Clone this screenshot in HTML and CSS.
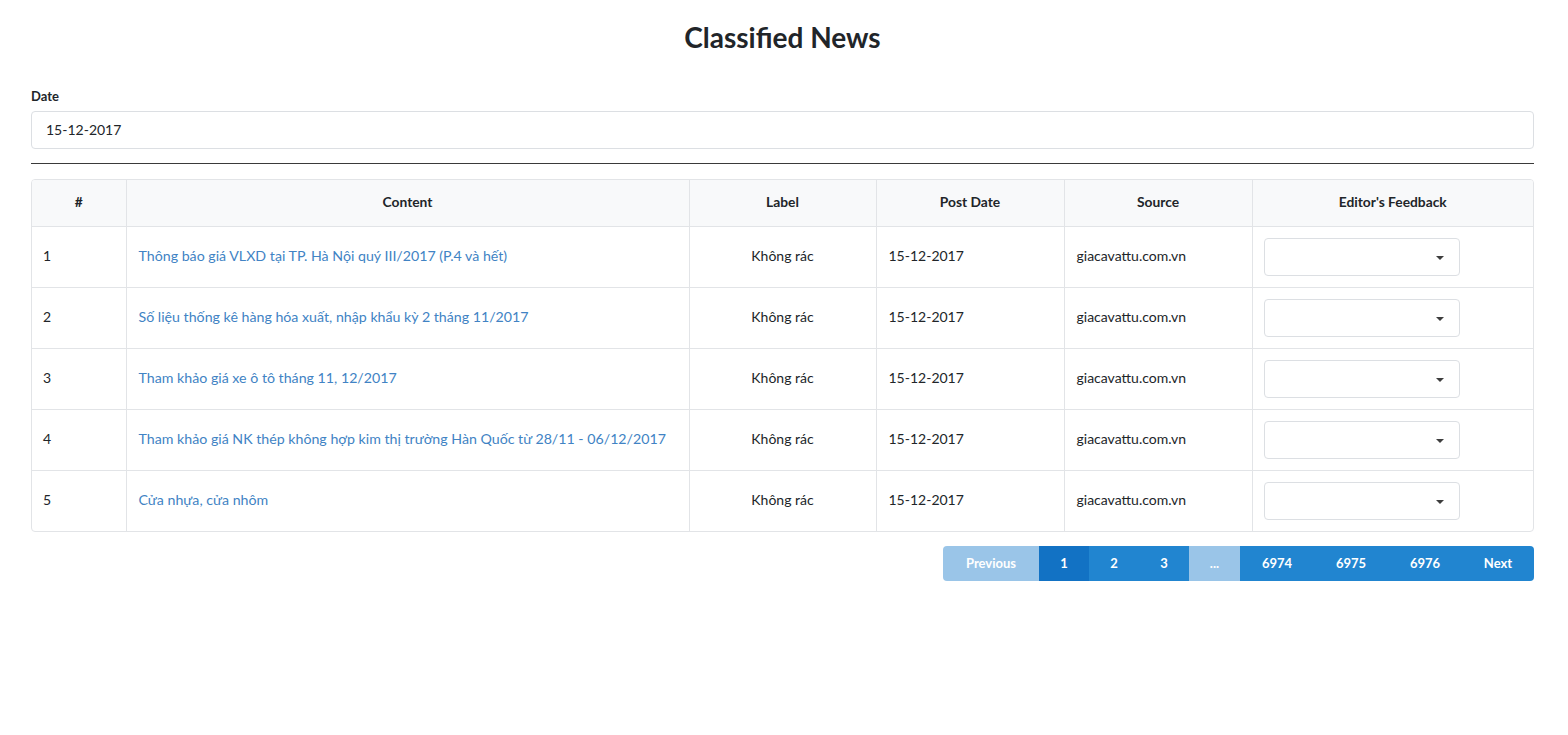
FILE: index.html
```html
<!DOCTYPE html>
<html>
<head>
<meta charset="utf-8">
<link rel="stylesheet" href="styles.css">
</head>
<body>
<div class="page">
  <h1 class="title">Classified News</h1>
  <div class="field">
    <label class="field-label">Date</label>
    <div class="input">15-12-2017</div>
  </div>
  <hr class="divider">
  <div class="table-wrap">
    <table class="news">
      <thead>
        <tr>
          <th class="c-num">#</th>
          <th class="c-content">Content</th>
          <th class="c-label">Label</th>
          <th class="c-date">Post Date</th>
          <th class="c-source">Source</th>
          <th class="c-fb">Editor's Feedback</th>
        </tr>
      </thead>
      <tbody>
        <tr>
          <td>1</td>
          <td><a class="link">Thông báo giá VLXD tại TP. Hà Nội quý III/2017 (P.4 và hết)</a></td>
          <td class="center">Không rác</td>
          <td>15-12-2017</td>
          <td>giacavattu.com.vn</td>
          <td class="fb"><div class="select"><span class="caret"></span></div></td>
        </tr>
        <tr>
          <td>2</td>
          <td><a class="link">Số liệu thống kê hàng hóa xuất, nhập khẩu kỳ 2 tháng 11/2017</a></td>
          <td class="center">Không rác</td>
          <td>15-12-2017</td>
          <td>giacavattu.com.vn</td>
          <td class="fb"><div class="select"><span class="caret"></span></div></td>
        </tr>
        <tr>
          <td>3</td>
          <td><a class="link">Tham khảo giá xe ô tô tháng 11, 12/2017</a></td>
          <td class="center">Không rác</td>
          <td>15-12-2017</td>
          <td>giacavattu.com.vn</td>
          <td class="fb"><div class="select"><span class="caret"></span></div></td>
        </tr>
        <tr>
          <td>4</td>
          <td><a class="link">Tham khảo giá NK thép không hợp kim thị trường Hàn Quốc từ 28/11 - 06/12/2017</a></td>
          <td class="center">Không rác</td>
          <td>15-12-2017</td>
          <td>giacavattu.com.vn</td>
          <td class="fb"><div class="select"><span class="caret"></span></div></td>
        </tr>
        <tr>
          <td>5</td>
          <td><a class="link">Cửa nhựa, cửa nhôm</a></td>
          <td class="center">Không rác</td>
          <td>15-12-2017</td>
          <td>giacavattu.com.vn</td>
          <td class="fb"><div class="select"><span class="caret"></span></div></td>
        </tr>
      </tbody>
    </table>
  </div>
  <div class="pager-row">
    <div class="pager">
      <span class="pg disabled pg-prev">Previous</span>
      <span class="pg active">1</span>
      <span class="pg">2</span>
      <span class="pg">3</span>
      <span class="pg disabled pg-dots">...</span>
      <span class="pg pg-wide">6974</span>
      <span class="pg pg-wide">6975</span>
      <span class="pg pg-wide">6976</span>
      <span class="pg pg-next">Next</span>
    </div>
  </div>
</div>
</body>
</html>
```

FILE: styles.css
```css
* { box-sizing: border-box; }
html, body { margin: 0; padding: 0; background: #fff; }
body {
  font-family: Lato, "Open Sans", "Liberation Sans", sans-serif;
  font-size: 14px;
  color: #212529;
}
.page {
  padding: 0 34px 0 31px;
}
.title {
  margin: 0;
  padding-top: 20px;
  height: 70px;
  text-align: center;
  font-size: 28px;
  font-weight: 700;
  line-height: 34px;
  color: #212529;
}
.field {
  margin-top: 16px;
  display: flex;
  flex-direction: column;
}
.field-label {
  font-size: 13px;
  font-weight: 700;
  line-height: 20px;
  margin-bottom: 5px;
}
.input {
  height: 38px;
  border: 1px solid #dcdfe3;
  border-radius: 4px;
  padding: 0 14px;
  line-height: 35px;
  font-size: 14px;
}
.divider {
  margin: 14px 0 15px;
  border: 0;
  border-top: 1px solid #3a3a3a;
  height: 0;
}
.table-wrap {
  border: 1px solid #e2e4e7;
  border-radius: 4px;
  overflow: hidden;
}
.news {
  width: 100%;
  border-collapse: collapse;
  table-layout: fixed;
}
.news th {
  height: 46px;
  background: #f8f9fa;
  font-size: 13.8px;
  font-weight: 700;
  text-align: center;
  border-left: 1px solid #e2e4e7;
  padding: 0 12px 2px;
}
.news th:first-child, .news td:first-child { border-left: 0; }
.news td {
  height: 61px;
  border-top: 1px solid #e2e4e7;
  border-left: 1px solid #e2e4e7;
  padding: 0 11px 2px 12px;
  font-size: 14px;
  vertical-align: middle;
}
.news td:first-child { padding-left: 11px; }
.news td.fb { padding-left: 11px; }
.c-num { width: 94px; }
.c-content { width: 563px; }
.c-label { width: 187px; }
.c-date { width: 188px; }
.c-source { width: 188px; }
.center { text-align: center; }
.news td.center { padding-left: 11px; padding-right: 11px; }
.link { color: #4183c4; text-decoration: none; font-size: 14.2px; }
.select {
  width: 196px;
  height: 38px;
  margin-top: 2px;
  border: 1px solid #dcdfe3;
  border-radius: 4px;
  display: flex;
  align-items: center;
  justify-content: flex-end;
  padding-right: 15px;
}
.caret {
  width: 0;
  height: 0;
  border-left: 4px solid transparent;
  border-right: 4px solid transparent;
  border-top: 4px solid #3d3d3d;
  margin-top: 2px;
}
.pager-row {
  display: flex;
  justify-content: flex-end;
  margin-top: 14px;
}
.pager {
  display: flex;
  border-radius: 4px;
  overflow: hidden;
}
.pg {
  height: 35px;
  line-height: 35px;
  width: 50px;
  text-align: center;
  font-size: 13px;
  font-weight: 700;
  color: #fff;
  background: #2185d0;
}
.pg.active { background: #1272c4; }
.pg.disabled { background: #9ac5e8; }
.pg-prev { width: 96px; }
.pg-dots { width: 51px; }
.pg-wide { width: 74px; }
.pg-next { width: 72px; }
```
